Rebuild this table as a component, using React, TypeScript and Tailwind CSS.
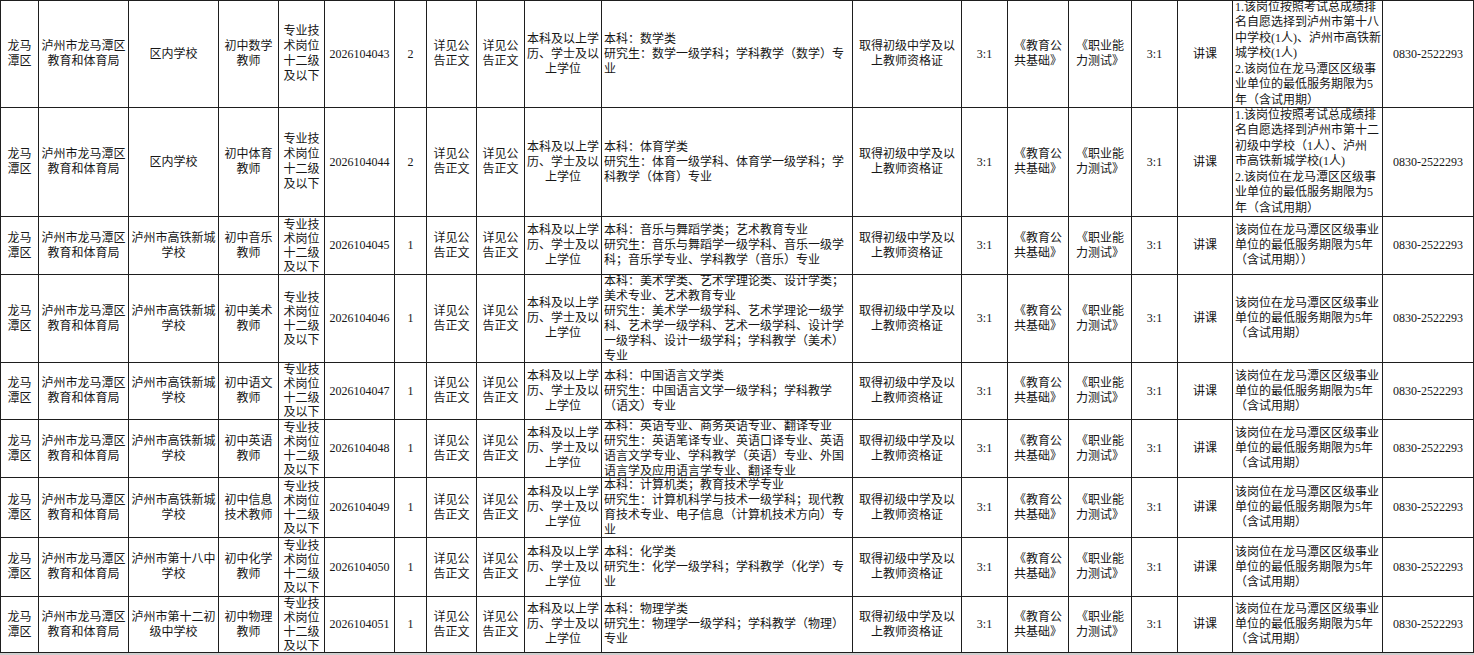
import clsx from "clsx";

type Post = {
  school: string;
  subject: string;
  code: string;
  count: string;
  major: string;
  note: string;
};

const cols =
  "grid-cols-[39px_90px_90px_60px_46px_70px_32px_50px_48px_77px_251px_109px_46px_61px_63px_46px_55px_150px_91px]";
const rowHeights = [
  "h-[108px]",
  "h-[109px]",
  "h-[58px]",
  "h-[88px]",
  "h-[57px]",
  "h-[58px]",
  "h-[60px]",
  "h-[59px]",
  "h-[56px]",
];

const shortNote = "该岗位在龙马潭区区级事业\n单位的最低服务期限为5年\n（含试用期）";

const posts: Array<Post> = [
  {
    school: "区内学校",
    subject: "初中数学\n教师",
    code: "2026104043",
    count: "2",
    major: "本科：数学类\n研究生：数学一级学科；学科教学（数学）专\n业",
    note: "1.该岗位按照考试总成绩排\n名自愿选择到泸州市第十八\n中学校(1人)、泸州市高铁新\n城学校(1人)\n2.该岗位在龙马潭区区级事\n业单位的最低服务期限为5\n年（含试用期）",
  },
  {
    school: "区内学校",
    subject: "初中体育\n教师",
    code: "2026104044",
    count: "2",
    major: "本科：体育学类\n研究生：体育一级学科、体育学一级学科；学\n科教学（体育）专业",
    note: "1.该岗位按照考试总成绩排\n名自愿选择到泸州市第十二\n初级中学校（1人）、泸州\n市高铁新城学校(1人)\n2.该岗位在龙马潭区区级事\n业单位的最低服务期限为5\n年（含试用期）",
  },
  {
    school: "泸州市高铁新城\n学校",
    subject: "初中音乐\n教师",
    code: "2026104045",
    count: "1",
    major: "本科：音乐与舞蹈学类；艺术教育专业\n研究生：音乐与舞蹈学一级学科、音乐一级学\n科；音乐学专业、学科教学（音乐）专业",
    note: "该岗位在龙马潭区区级事业\n单位的最低服务期限为5年\n（含试用期））",
  },
  {
    school: "泸州市高铁新城\n学校",
    subject: "初中美术\n教师",
    code: "2026104046",
    count: "1",
    major:
      "本科：美术学类、艺术学理论类、设计学类；\n美术专业、艺术教育专业\n研究生：美术学一级学科、艺术学理论一级学\n科、艺术学一级学科、艺术一级学科、设计学\n一级学科、设计一级学科；学科教学（美术）\n专业",
    note: shortNote,
  },
  {
    school: "泸州市高铁新城\n学校",
    subject: "初中语文\n教师",
    code: "2026104047",
    count: "1",
    major: "本科：中国语言文学类\n研究生：中国语言文学一级学科；学科教学\n（语文）专业",
    note: shortNote,
  },
  {
    school: "泸州市高铁新城\n学校",
    subject: "初中英语\n教师",
    code: "2026104048",
    count: "1",
    major:
      "本科：英语专业、商务英语专业、翻译专业\n研究生：英语笔译专业、英语口译专业、英语\n语言文学专业、学科教学（英语）专业、外国\n语言学及应用语言学专业、翻译专业",
    note: shortNote,
  },
  {
    school: "泸州市高铁新城\n学校",
    subject: "初中信息\n技术教师",
    code: "2026104049",
    count: "1",
    major: "本科：计算机类；教育技术学专业\n研究生：计算机科学与技术一级学科；现代教\n育技术专业、电子信息（计算机技术方向）专\n业",
    note: shortNote,
  },
  {
    school: "泸州市第十八中\n学校",
    subject: "初中化学\n教师",
    code: "2026104050",
    count: "1",
    major: "本科：化学类\n研究生：化学一级学科；学科教学（化学）专\n业",
    note: shortNote,
  },
  {
    school: "泸州市第十二初\n级中学校",
    subject: "初中物理\n教师",
    code: "2026104051",
    count: "1",
    major: "本科：物理学类\n研究生：物理学一级学科；学科教学（物理）\n专业",
    note: shortNote,
  },
];

const Cell = ({
  text,
  left,
  first,
  top,
  leading = "leading-[15px]",
}: {
  text: string;
  left?: boolean;
  first?: boolean;
  top?: boolean;
  leading?: string;
}) => (
  <div
    className={clsx(
      "flex items-center overflow-hidden border-r border-b border-[#1e1e1e] px-[2px]",
      left ? "justify-start text-left" : "justify-center text-center",
      first && "border-l",
      top && "border-t"
    )}
  >
    <div className={clsx("whitespace-pre", leading)}>{text}</div>
  </div>
);

const App = () => {
  return (
    <div className="h-[655px] w-[1474px] overflow-hidden bg-[#cfcfcf]">
      <div className="bg-white text-[12px] text-[#161616] font-['Liberation_Serif','Noto_Sans_CJK_SC',serif]">
        {posts.map((post, i) => {
          const top = i === 0;
          return (
            <div key={post.code} className={clsx("grid", cols, rowHeights[i])}>
              <Cell text={"龙马\n潭区"} first top={top} />
              <Cell text={"泸州市龙马潭区\n教育和体育局"} top={top} />
              <Cell text={post.school} top={top} />
              <Cell text={post.subject} top={top} />
              <Cell
                text={"专业技\n术岗位\n十二级\n及以下"}
                top={top}
                leading={i < 2 ? "leading-[15px]" : "leading-[14px]"}
              />
              <Cell text={post.code} top={top} />
              <Cell text={post.count} top={top} />
              <Cell text={"详见公\n告正文"} top={top} />
              <Cell text={"详见公\n告正文"} top={top} />
              <Cell text={"本科及以上学\n历、学士及以\n上学位"} top={top} />
              <Cell text={post.major} left top={top} />
              <Cell text={"取得初级中学及以\n上教师资格证"} top={top} />
              <Cell text="3:1" top={top} />
              <Cell text={"《教育公\n共基础》"} top={top} />
              <Cell text={"《职业能\n力测试》"} top={top} />
              <Cell text="3:1" top={top} />
              <Cell text="讲课" top={top} />
              <Cell text={post.note} left top={top} leading={i < 2 ? "leading-[15.5px]" : "leading-[15px]"} />
              <Cell text="0830-2522293" top={top} />
            </div>
          );
        })}
      </div>
    </div>
  );
};

export default App;
